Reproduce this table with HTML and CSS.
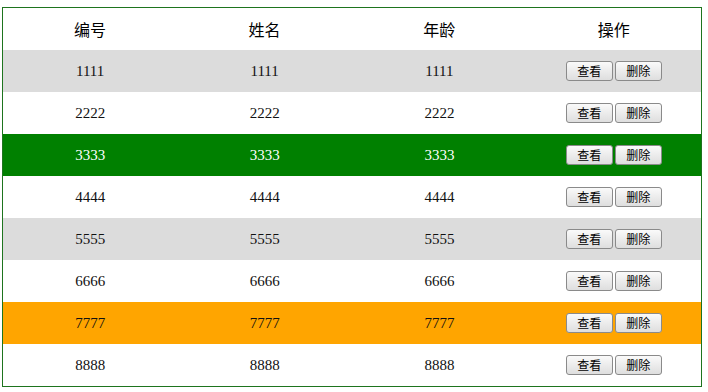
FILE: index.html
```html
<!DOCTYPE html>
<html lang="zh">
<head>
<meta charset="utf-8">
<link rel="stylesheet" href="styles.css">
</head>
<body>
<table class="grid">
  <thead>
    <tr><th>编号</th><th>姓名</th><th>年龄</th><th>操作</th></tr>
  </thead>
  <tbody>
    <tr class="gray"><td>1111</td><td>1111</td><td>1111</td><td><button class="btn">查看</button><button class="btn">删除</button></td></tr>
    <tr><td>2222</td><td>2222</td><td>2222</td><td><button class="btn">查看</button><button class="btn">删除</button></td></tr>
    <tr class="green"><td>3333</td><td>3333</td><td>3333</td><td><button class="btn">查看</button><button class="btn">删除</button></td></tr>
    <tr><td>4444</td><td>4444</td><td>4444</td><td><button class="btn">查看</button><button class="btn">删除</button></td></tr>
    <tr class="gray"><td>5555</td><td>5555</td><td>5555</td><td><button class="btn">查看</button><button class="btn">删除</button></td></tr>
    <tr><td>6666</td><td>6666</td><td>6666</td><td><button class="btn">查看</button><button class="btn">删除</button></td></tr>
    <tr class="orange"><td>7777</td><td>7777</td><td>7777</td><td><button class="btn">查看</button><button class="btn">删除</button></td></tr>
    <tr><td>8888</td><td>8888</td><td>8888</td><td><button class="btn">查看</button><button class="btn">删除</button></td></tr>
  </tbody>
</table>
</body>
</html>
```
FILE: styles.css
```css
html, body {
  margin: 0;
  padding: 0;
  background: #fff;
}
body {
  padding: 7px 0 0 2px;
  font-family: "Liberation Serif", "Noto Sans CJK SC", serif;
  color: #111;
}
.grid {
  width: 700px;
  border: 1px solid #1e741e;
  border-collapse: collapse;
  border-spacing: 0;
  table-layout: fixed;
}
.grid th, .grid td {
  height: 42px;
  padding: 0;
  text-align: center;
  vertical-align: middle;
}
.grid th {
  font-family: "Noto Sans CJK SC", sans-serif;
  font-weight: normal;
  font-size: 16px;
  color: #000;
}
.grid td {
  font-size: 15px;
}
.gray { background: #dcdcdc; }
.green { background: #008000; }
.green td { color: #fff; }
.orange { background: #ffa500; }
.btn {
  width: 47px;
  height: 20px;
  margin: 0 1px;
  padding: 0;
  font-family: "Noto Sans CJK SC", sans-serif;
  font-size: 12px;
  line-height: 18px;
  color: #000;
  border: 1px solid #8a8a8a;
  border-radius: 3px;
  background: linear-gradient(#fafafa, #dedede);
  vertical-align: middle;
}
```
